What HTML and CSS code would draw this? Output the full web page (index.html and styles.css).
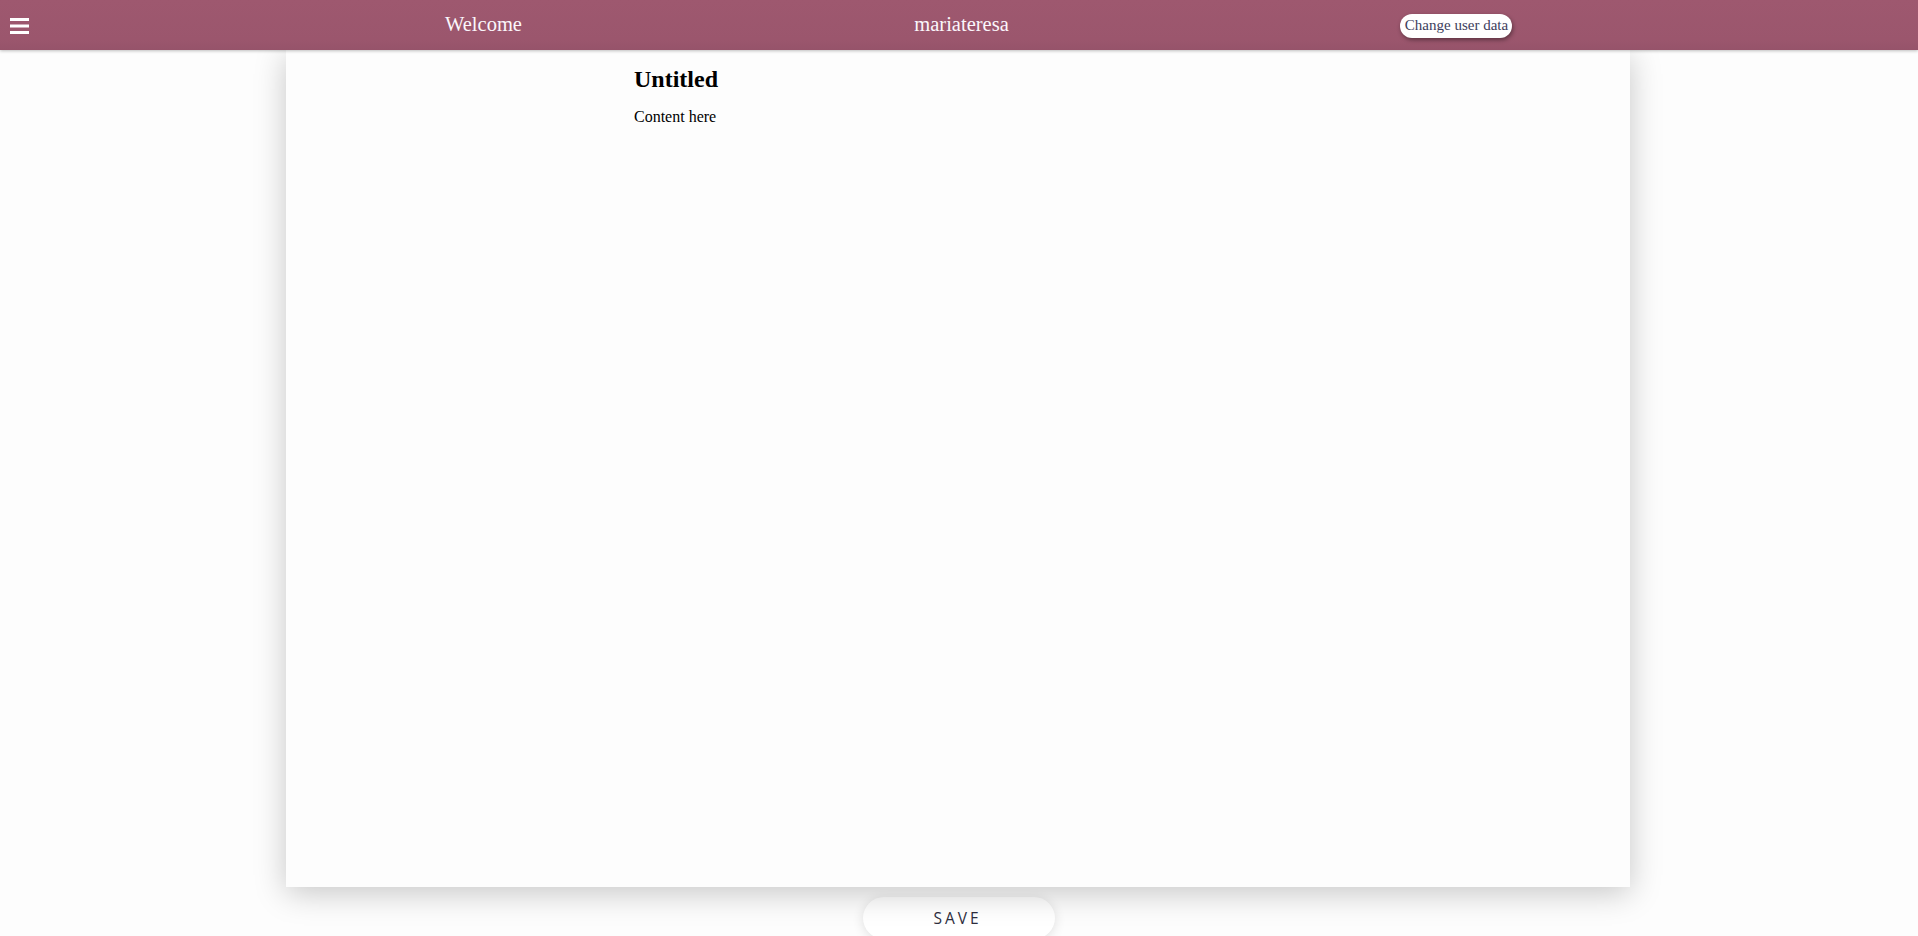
FILE: index.html
```html
<!DOCTYPE html>
<html lang="en">
<head>
<meta charset="utf-8">
<title>Editor</title>
<link rel="stylesheet" href="styles.css">
</head>
<body>
<header class="topbar">
  <button class="menu-btn" aria-label="Menu">
    <svg width="19" height="16" viewBox="0 0 19 16"><rect x="0" y="0" width="19" height="3" fill="#fff"/><rect x="0" y="6.5" width="19" height="3" fill="#fff"/><rect x="0" y="13" width="19" height="3" fill="#fff"/></svg>
  </button>
  <div class="cell">Welcome</div>
  <div class="cell">mariateresa</div>
  <div class="cell"><button class="user-btn">Change user data</button></div>
</header>
<main class="workspace">
  <section class="sheet">
    <div class="sheet-body">
      <h2 class="doc-title">Untitled</h2>
      <p class="doc-text">Content here</p>
    </div>
  </section>
  <button class="save-btn">SAVE</button>
</main>
</body>
</html>
```
FILE: styles.css
```css
html, body {
  margin: 0;
  padding: 0;
}
body {
  background: #fdfdfd;
  height: 100vh;
  overflow: hidden;
  font-family: "Liberation Serif", "Times New Roman", serif;
}
.topbar {
  position: relative;
  z-index: 2;
  height: 50px;
  display: grid;
  grid-template-columns: 240px 487px 469px 520px 1fr;
  align-items: center;
  background: linear-gradient(#9e586f, #9b566d 80%, #96536a);
  box-shadow: 0 1px 3px rgba(0, 0, 0, 0.25);
  color: #fbf6fb;
  font-size: 20.5px;
}
.menu-btn {
  justify-self: start;
  margin-left: 10px;
  margin-top: 1px;
  padding: 0;
  border: 0;
  background: none;
  display: flex;
}
.cell {
  text-align: center;
  padding-bottom: 1px;
}
.user-btn {
  font-family: "Liberation Serif", "Times New Roman", serif;
  font-size: 15px;
  color: #3d3d5c;
  background: #fff;
  border: 0;
  border-radius: 12px;
  height: 24px;
  padding: 0 4px 0 5px;
  box-shadow: 1px 2px 4px rgba(0, 0, 0, 0.4);
  margin-top: 2px;
}
.workspace {
  display: flex;
  flex-direction: column;
  align-items: center;
}
.sheet {
  position: relative;
  z-index: 1;
  width: 1344px;
  height: 837px;
  margin-left: -2px;
  background: #fdfdfd;
  box-shadow: 0 6px 30px rgba(0, 0, 0, 0.22);
}
.sheet-body {
  padding: 16px 348px 0;
}
.doc-title {
  margin: 0 0 15px;
  font-size: 24px;
  font-weight: bold;
  color: #000;
}
.doc-text {
  margin: 0;
  font-size: 16px;
  color: #000;
}
.save-btn {
  margin-top: 10px;
  width: 192px;
  height: 42px;
  border: 0;
  border-radius: 21px;
  background: #fff;
  box-shadow: 0 2px 12px rgba(0, 0, 0, 0.12);
  font-family: "Open Sans", "Noto Sans", sans-serif;
  font-size: 15.5px;
  letter-spacing: 3px;
  padding-left: 3px;
  color: #2e2e3e;
}
```
